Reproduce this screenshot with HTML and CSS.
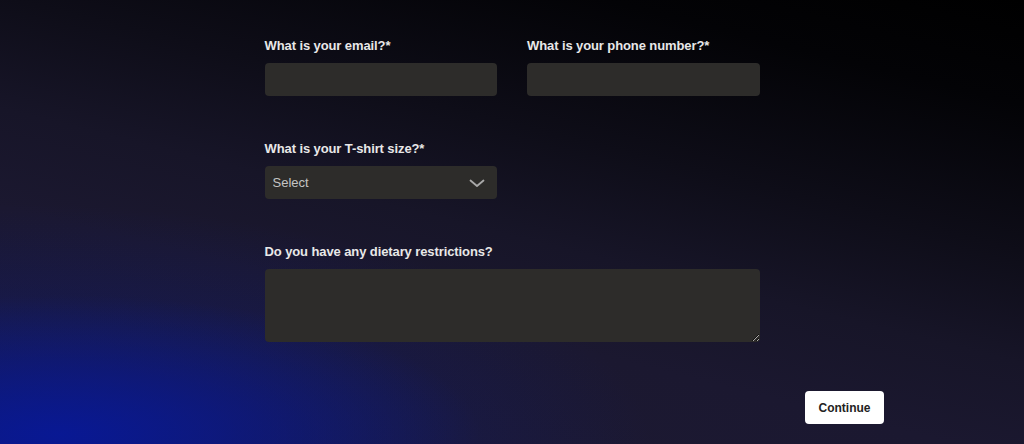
FILE: index.html
```html
<!DOCTYPE html>
<html lang="en">

<head>
	<meta charset="UTF-8">
	<meta name="viewport" content="width=device-width, initial-scale=1.0">
	<title>Registration</title>
	<link rel="stylesheet" href="styles.css">
</head>

<body>
	<main class="page">
		<form class="form">
			<div class="form__row">
				<label class="field">
					<span class="field__label">What is your email?*</span>
					<input class="field__input" type="email">
				</label>
				<label class="field">
					<span class="field__label">What is your phone number?*</span>
					<input class="field__input" type="tel">
				</label>
			</div>

			<div class="form__row">
				<label class="field">
					<span class="field__label">What is your T-shirt size?*</span>
					<span class="select">
						<select class="field__input select__box">
							<option>Select</option>
							<option>S</option>
							<option>M</option>
							<option>L</option>
							<option>XL</option>
						</select>
						<svg class="select__icon" width="16" height="9" viewBox="0 0 16 9">
							<path d="M1.5 1.5 L8 7 L14.5 1.5" fill="none" stroke="#a9a9a9" stroke-width="1.8" stroke-linecap="round" stroke-linejoin="round"/>
						</svg>
					</span>
				</label>
			</div>

			<div class="form__row form__row--wide">
				<label class="field">
					<span class="field__label">Do you have any dietary restrictions?</span>
					<textarea class="field__input field__area"></textarea>
				</label>
			</div>
		</form>

		<div class="actions">
			<button class="btn" type="button">Continue</button>
		</div>
	</main>
</body>

</html>
```

FILE: styles.css
```css
html,
body {
	margin: 0;
	height: 100%;
}

body {
	font-family: "Liberation Sans", Arial, sans-serif;
	color: #e6e6e6;
	background-color: #050409;
	background-image:
		radial-gradient(ellipse 420px 140px at 60px 435px, rgba(8, 24, 150, 0.95), rgba(8, 24, 150, 0) 100%),
		radial-gradient(ellipse 650px 240px at 0 444px, rgba(14, 26, 120, 0.75), rgba(14, 26, 120, 0) 100%),
		linear-gradient(194deg, #000 0%, #030306 15%, #0e0d18 36%, #171528 52%, #1b1830 66%, #1d1a35 100%);
	overflow: hidden;
}

.page {
	width: 744px;
	margin: 0 auto;
	padding-top: 38px;
	box-sizing: border-box;
}

.form {
	width: 495px;
	margin: 0 auto;
	display: flex;
	flex-direction: column;
	gap: 45px;
}

.form__row {
	display: grid;
	grid-template-columns: 1fr 1fr;
	column-gap: 30px;
}

.form__row--wide {
	grid-template-columns: 1fr;
}

.field {
	display: flex;
	flex-direction: column;
	gap: 9px;
}

.field__label {
	font-size: 13px;
	line-height: 16px;
	font-weight: bold;
	letter-spacing: -0.1px;
	color: #e8e8e8;
}

.field__input {
	display: block;
	width: 100%;
	height: 33px;
	box-sizing: border-box;
	margin: 0;
	padding: 0 8px;
	border: none;
	border-radius: 4px;
	background: #2d2c2a;
	color: #d0d0d0;
	font: 13px "Liberation Sans", Arial, sans-serif;
	outline: none;
}

.field__area {
	height: 73px;
	padding: 8px;
	resize: vertical;
}

.select {
	position: relative;
	display: block;
}

.select__box {
	appearance: none;
	-webkit-appearance: none;
	color: #c4c4c4;
}

.select__icon {
	position: absolute;
	right: 12px;
	top: 13px;
	pointer-events: none;
}

.actions {
	display: flex;
	justify-content: flex-end;
	margin-top: 49px;
}

.btn {
	width: 79px;
	height: 33px;
	border: none;
	border-radius: 4px;
	background: #fff;
	color: #222;
	font: bold 12px "Liberation Sans", Arial, sans-serif;
	cursor: pointer;
}
```
